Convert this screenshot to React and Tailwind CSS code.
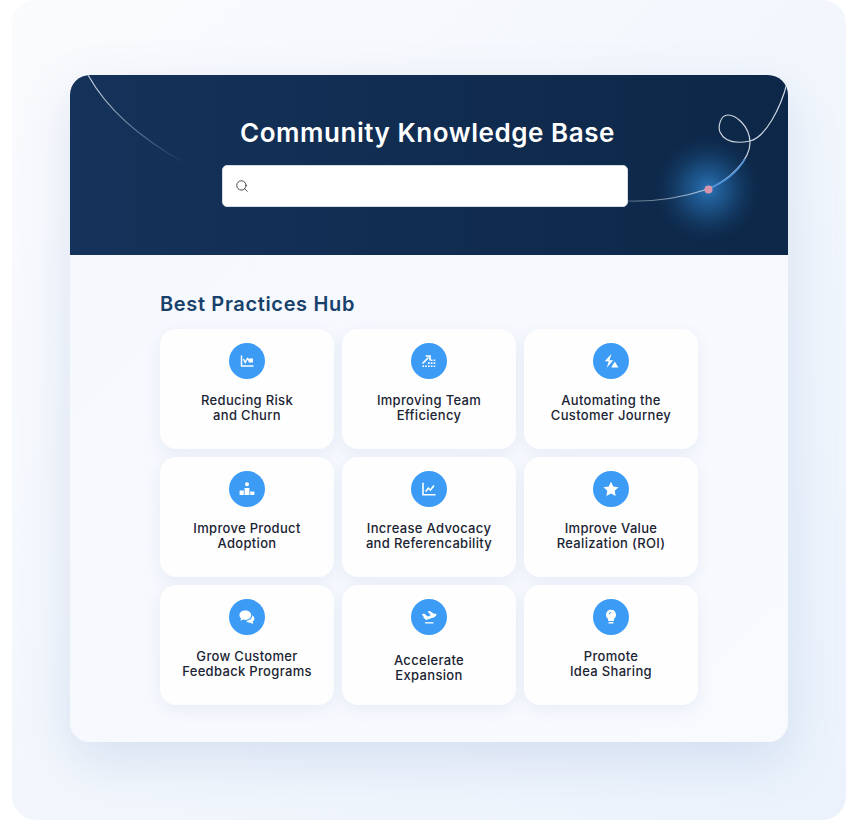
import React from 'react';
import { Search } from 'lucide-react';

const FONT = "font-['Inter','Noto_Sans',sans-serif]";

// small white glyphs sitting in the blue circles, 16x16 box
const icons = {
  chart: (
    <>
      <path d="M2.5 2.5v10.5H14.5" fill="none" stroke="#fff" strokeWidth="1.5" />
      <path d="M4.5 6 6.2 9.5 8.5 5.5 10 7.5" fill="none" stroke="#fff" strokeWidth="1.4" />
      <path d="M9.5 5.5H14V9.5H9.5z" fill="#fff" />
    </>
  ),
  dots: (
    <>
      <path d="M1.5 10.5 7.5 4.5M4.6 3H9v4.4" fill="none" stroke="#fff" strokeWidth="1.7" />
      <path d="M9.8 6.4h1.7v1.7H9.8zM12.6 6.4h1.7v1.7h-1.7zM7 9.2h1.7v1.7H7zM9.8 9.2h1.7v1.7H9.8zM12.6 9.2h1.7v1.7h-1.7zM1.4 12.4h1.7v1.7H1.4zM4.2 12.4h1.7v1.7H4.2zM7 12.4h1.7v1.7H7zM9.8 12.4h1.7v1.7H9.8zM12.6 12.4h1.7v1.7h-1.7z" fill="#fff" />
    </>
  ),
  bolt: (
    <>
      <path d="M8.5.8 1.8 8.2h3.8L3.9 14.8l6.3-7.6H6.5z" fill="#fff" />
      <path d="M11.8 8.4 15.4 14.6H8.2z" fill="#fff" />
    </>
  ),
  podium: (
    <>
      <circle cx="8" cy="3.2" r="2" fill="#fff" />
      <path d="M5.6 7h4.8v7H5.6zM.6 9.6h4.2V14H.6zM11.2 10.6h4.2V14h-4.2z" fill="#fff" />
    </>
  ),
  line: (
    <>
      <path d="M2 1.8v11.9h12.5" fill="none" stroke="#fff" strokeWidth="1.6" />
      <path d="M4.6 10.6 7.3 7.2l2.1 1.9 3.6-4.6" fill="none" stroke="#fff" strokeWidth="1.6" />
    </>
  ),
  star: <path d="m8 .8 2.3 4.7 5.2.7-3.8 3.6.9 5.2L8 12.6 3.4 15l.9-5.2L.5 6.2l5.2-.7z" fill="#fff" />,
  chat: (
    <>
      <path d="M6.3 1.5C3 1.5.4 3.5.4 6.1c0 1.3.7 2.5 1.7 3.3l-.7 2.4 2.9-1.2c.6.2 1.3.3 2 .3 3.2 0 5.9-2.1 5.9-4.8S9.5 1.5 6.3 1.5z" fill="#fff" />
      <path d="M13.2 6.2c.1 3.1-2.7 5.5-6.3 5.6.8 1.2 2.4 2 4.2 2l3.2 1.3-.6-2.4c1-.7 1.7-1.7 1.7-2.9 0-1.5-.9-2.9-2.2-3.6z" fill="#fff" />
    </>
  ),
  plane: (
    <>
      <path d="M.6 5.6 3 4.6l3.8 3 3-1.4-3.2-3.7 2.2-.5 4.6 3.1 1.6-.6.5 1.7-2.2 2.1-8.3 2.6L1.9 8 3 7.5z" fill="#fff" />
      <path d="M4 13.2h8.4v1.3H4z" fill="#fff" />
    </>
  ),
  bulb: (
    <>
      <path d="M8 .8a4.9 4.9 0 0 0-2.9 8.9V12h5.8V9.7A4.9 4.9 0 0 0 8 .8z" fill="#fff" />
      <path d="M6.2 5.4a2 2 0 0 1 2-2" fill="none" stroke="#3b9bf5" strokeWidth="1" />
      <path d="M5.6 13h4.8v1.5H5.6z" fill="#fff" />
    </>
  ),
};

const rows = [
  [
    { icon: 'chart', lines: ['Reducing Risk', 'and Churn'] },
    { icon: 'dots', lines: ['Improving Team', 'Efficiency'] },
    { icon: 'bolt', lines: ['Automating the', 'Customer Journey'] },
  ],
  [
    { icon: 'podium', lines: ['Improve Product', 'Adoption'] },
    { icon: 'line', lines: ['Increase Advocacy', 'and Referencability'] },
    { icon: 'star', lines: ['Improve Value', 'Realization (ROI)'] },
  ],
  [
    { icon: 'chat', lines: ['Grow Customer', 'Feedback Programs'] },
    { icon: 'plane', lines: ['Accelerate', 'Expansion'], low: true },
    { icon: 'bulb', lines: ['Promote', 'Idea Sharing'] },
  ],
];

const PracticeCard = ({ icon, lines, low }) => (
  <div className="flex h-[120px] flex-col items-center rounded-[16px] bg-[#fefeff] pt-[14px] shadow-[0_5px_16px_rgba(140,165,205,0.14)]">
    <div className="flex h-[36px] w-[36px] items-center justify-center rounded-full bg-[#3b9bf5]">
      <svg viewBox="0 0 16 16" className="h-[16px] w-[16px]">{icons[icon]}</svg>
    </div>
    <p className={`${low ? 'mt-[18px]' : 'mt-[14px]'} text-center text-[13px] leading-[15px] font-medium tracking-[0.32px] text-[#1b2433]`}>
      {lines[0]}
      <br />
      {lines[1]}
    </p>
  </div>
);

const HeaderArt = () => (
  <svg viewBox="0 0 718 180" className="absolute inset-0 h-full w-full" fill="none">
    <defs>
      <radialGradient id="glow">
        <stop offset="0" stopColor="#2d7cc4" stopOpacity="0.9" />
        <stop offset="0.45" stopColor="#22639f" stopOpacity="0.55" />
        <stop offset="1" stopColor="#123a66" stopOpacity="0" />
      </radialGradient>
      <linearGradient id="fadeLeft" x1="18" y1="0" x2="115" y2="88" gradientUnits="userSpaceOnUse">
        <stop offset="0" stopColor="#d3deeb" />
        <stop offset="1" stopColor="#c9d6e6" stopOpacity="0" />
      </linearGradient>
      <linearGradient id="fadeRight" x1="558" y1="127" x2="640" y2="110" gradientUnits="userSpaceOnUse">
        <stop offset="0" stopColor="#aab8c8" stopOpacity="0.4" />
        <stop offset="1" stopColor="#c4d4e4" />
      </linearGradient>
    </defs>
    <circle cx="638" cy="114" r="54" fill="url(#glow)" />
    <path d="M18 0C38 36 75 66 115 88" stroke="url(#fadeLeft)" strokeWidth="1.1" />
    <path d="M558 126C590 127 620 120 638 114" stroke="url(#fadeRight)" strokeWidth="1.1" />
    <path d="M638 114C660 105 680 84 680 68C680 50 665 40 658 40C650 40 648 52 650 57C654 66 665 69 680 66C696 62 711 32 717 8" stroke="#ccd5df" strokeWidth="1.2" />
    <path d="M638 114C655 107 668 96 675 84" stroke="#4f93dc" strokeWidth="1.5" />
    <circle cx="638.5" cy="114.5" r="4" fill="#d695ab" />
  </svg>
);

export default function App() {
  return (
    <div className={`${FONT} h-[825px] w-[859px] bg-white pr-[13px] pb-[5px] pl-[12px]`}>
      <div className="h-[820px] rounded-[24px] bg-gradient-to-br from-[#fafbfd] to-[#ebf2fc] pt-[75px] pl-[58px]">
        <div className="h-[667px] w-[718px] overflow-hidden rounded-[20px] bg-gradient-to-br from-[#f5f8fd] to-[#f8fafe] shadow-[0_18px_50px_rgba(120,150,200,0.22)]">
          <header className="relative flex h-[180px] flex-col items-center bg-gradient-to-r from-[#15325a] to-[#0c2747] pt-[41px]">
            <HeaderArt />
            <h1 className="relative mr-[3px] text-[26px] leading-[34px] font-semibold tracking-[0.55px] text-white">
              Community Knowledge Base
            </h1>
            <div className="relative mt-[15px] mr-[8px] flex h-[42px] w-[406px] items-center rounded-[5px] border border-[#d5dae2] bg-white pl-[12px]">
              <Search className="h-[14px] w-[14px] text-[#333]" strokeWidth={1.5} />
            </div>
          </header>
          <section className="pt-[35px] pr-[90px] pl-[90px]">
            <h2 className="text-[20px] leading-[28px] font-semibold tracking-[0.65px] text-[#17416b]">Best Practices Hub</h2>
            <div className="mt-[11px] flex flex-col gap-[8px]">
              {rows.map((row, i) => (
                <div key={i} className="grid grid-cols-3 gap-[8px]">
                  {row.map((c) => (
                    <PracticeCard key={c.icon} {...c} />
                  ))}
                </div>
              ))}
            </div>
          </section>
        </div>
      </div>
    </div>
  );
}
